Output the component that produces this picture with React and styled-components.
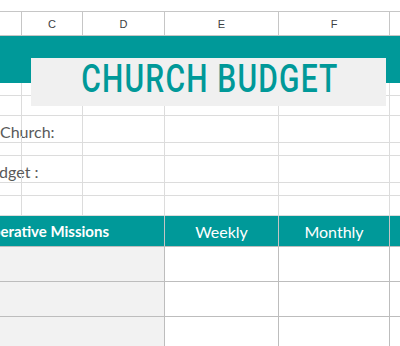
import React from "react";
import styled, { createGlobalStyle } from "styled-components";

const TEAL = "#009999";
const COLUMNS = "22px 61px 82px 114px 111px 1fr";

const GlobalStyle = createGlobalStyle`
  html, body {
    margin: 0;
    padding: 0;
    background: #ffffff;
    overflow: hidden;
  }
  body {
    font-family: Lato, "Open Sans", sans-serif;
  }
`;

const Sheet = styled.div`
  position: relative;
  width: 400px;
  height: 346px;
  overflow: hidden;
`;

const TopGap = styled.div`
  height: 11px;
`;

const ColumnHeader = styled.div`
  display: grid;
  grid-template-columns: ${COLUMNS};
  height: 25px;
  box-sizing: border-box;
  border-top: 1px solid #c6c6c6;
  border-bottom: 1px solid #c6c6c6;
`;

const ColumnLetter = styled.div`
  box-sizing: border-box;
  border-right: ${({ $last }) => ($last ? "none" : "1px solid #c6c6c6")};
  display: flex;
  align-items: center;
  justify-content: center;
  font-family: "Liberation Sans", Arial, sans-serif;
  font-size: 11px;
  color: #3c4043;
`;

const Banner = styled.div`
  height: 47px;
  background: ${TEAL};
`;

const GridRow = styled.div`
  display: grid;
  grid-template-columns: ${COLUMNS};
  height: ${({ $height }) => $height}px;
`;

const Cell = styled.div`
  box-sizing: border-box;
  border-right: ${({ $last }) => ($last ? "none" : "1px solid #dcdcdc")};
  border-bottom: 1px solid #dcdcdc;
  min-width: 0;
`;

const LabelCell = styled(Cell)`
  overflow: visible;
  white-space: nowrap;
  padding-top: 6px;
  font-size: 16px;
  line-height: 20px;
  color: #595959;
  text-indent: ${({ $indent }) => $indent}px;
`;

const TitleCard = styled.div`
  position: absolute;
  left: 31px;
  top: 58px;
  width: 355px;
  height: 48px;
  background: #f0f0f0;
  display: flex;
  justify-content: center;
  overflow: hidden;
`;

const TitleText = styled.div`
  font-family: Roboto, "Liberation Sans", sans-serif;
  font-size: 38px;
  font-weight: 500;
  line-height: 42px;
  letter-spacing: 1.5px;
  color: ${TEAL};
  white-space: nowrap;
  transform: scaleX(0.79);
  transform-origin: center top;
  margin-left: 3px;
`;

const TableHeader = styled.div`
  display: grid;
  grid-template-columns: ${COLUMNS};
  height: 31px;
  box-sizing: border-box;
  background: ${TEAL};
  border-bottom: 1px solid #bdbdbd;
`;

const HeaderCell = styled.div`
  box-sizing: border-box;
  grid-column: ${({ $span }) => ($span ? `span ${$span}` : "auto")};
  border-right: ${({ $last }) => ($last ? "none" : "1px solid #c4c4c4")};
  display: flex;
  align-items: center;
  justify-content: ${({ $end }) => ($end ? "flex-end" : "center")};
  padding-right: ${({ $end }) => ($end ? "55px" : "0")};
  color: #ffffff;
  font-size: ${({ $bold }) => ($bold ? "15px" : "16px")};
  font-weight: ${({ $bold }) => ($bold ? 700 : 400)};
  white-space: nowrap;
  min-width: 0;
`;

const TableRow = styled.div`
  display: grid;
  grid-template-columns: ${COLUMNS};
  height: 35px;
`;

const TableCell = styled.div`
  box-sizing: border-box;
  grid-column: ${({ $span }) => ($span ? `span ${$span}` : "auto")};
  background: ${({ $shaded }) => ($shaded ? "#f2f2f2" : "#ffffff")};
  border-right: ${({ $last }) => ($last ? "none" : "1px solid #bdbdbd")};
  border-bottom: 1px solid #bdbdbd;
`;

const letters = ["", "C", "D", "E", "F", ""];

const plainRow = (key, height) => (
  <GridRow key={key} $height={height}>
    {letters.map((_, i) => (
      <Cell key={i} $last={i === letters.length - 1} />
    ))}
  </GridRow>
);

const labelRow = (key, text, indent) => (
  <GridRow key={key} $height={20}>
    <LabelCell $indent={indent}>{text}</LabelCell>
    {letters.slice(1).map((_, i) => (
      <Cell key={i} $last={i === letters.length - 2} />
    ))}
  </GridRow>
);

const App = () => (
  <Sheet>
    <GlobalStyle />
    <TopGap />
    <ColumnHeader>
      {letters.map((letter, i) => (
        <ColumnLetter key={i} $last={i === letters.length - 1}>
          {letter}
        </ColumnLetter>
      ))}
    </ColumnHeader>
    <Banner />
    {plainRow("r0", 13)}
    {plainRow("r1", 20)}
    {labelRow("r2", "Church:", 0)}
    {plainRow("r3", 20)}
    {labelRow("r4", "Budget :", -20)}
    {plainRow("r5", 20)}
    {plainRow("r6", 20)}
    <TableHeader>
      <HeaderCell $span={3} $end $bold>
        Cooperative Missions
      </HeaderCell>
      <HeaderCell>Weekly</HeaderCell>
      <HeaderCell>Monthly</HeaderCell>
      <HeaderCell $last />
    </TableHeader>
    {[0, 1, 2].map((row) => (
      <TableRow key={row}>
        <TableCell $span={3} $shaded />
        <TableCell />
        <TableCell />
        <TableCell $last />
      </TableRow>
    ))}
    <TitleCard>
      <TitleText>CHURCH BUDGET</TitleText>
    </TitleCard>
  </Sheet>
);

export default App;
